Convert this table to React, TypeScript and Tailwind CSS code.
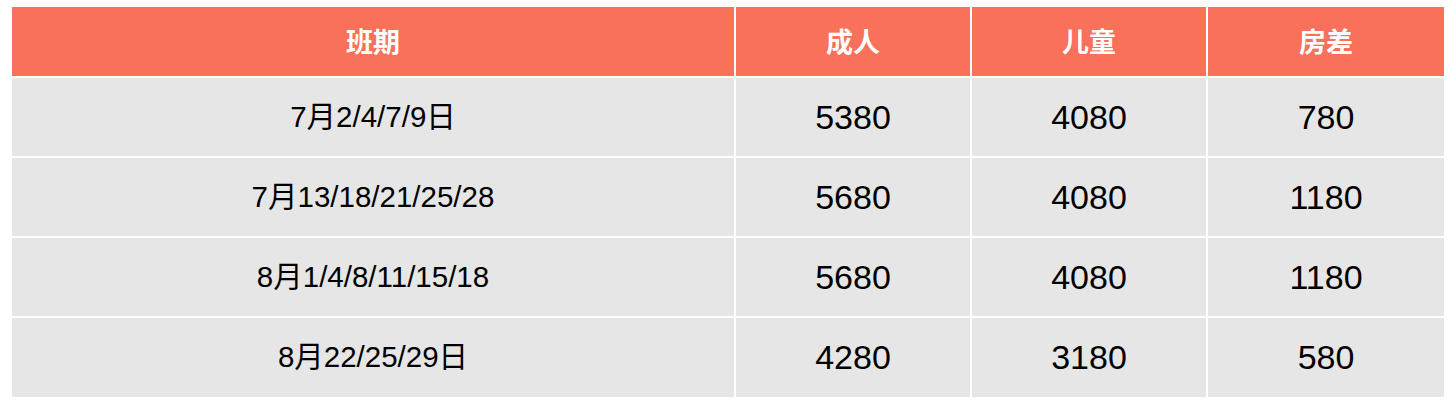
import React from "react";

const rows = [
  ["7月2/4/7/9日", "5380", "4080", "780"],
  ["7月13/18/21/25/28", "5680", "4080", "1180"],
  ["8月1/4/8/11/15/18", "5680", "4080", "1180"],
  ["8月22/25/29日", "4280", "3180", "580"],
];

export default function App() {
  return (
    <div className="w-[1455px] h-[407px] bg-white pt-[7px] pl-[12px]" style={{ fontFamily: '"Liberation Sans", "Noto Sans CJK SC", sans-serif' }}>
      <div className="grid grid-cols-[722px_234px_234px_236px] gap-[2px] w-[1432px]">
        {["班期", "成人", "儿童", "房差"].map((h) => (
          <div key={h} className="h-[69px] bg-[#F9705B] flex items-center justify-center text-white font-bold text-[27px]" style={{ fontFamily: '"Noto Sans CJK SC", sans-serif' }}>
            {h}
          </div>
        ))}
        {rows.map((r, i) => (
          <React.Fragment key={i}>
            <div className={`${i === 3 ? "h-[79px]" : "h-[78px]"} bg-[#E6E6E6] flex items-center justify-center text-black text-[29.5px]`}>
              {r[0]}
            </div>
            {r.slice(1).map((v, j) => (
              <div key={j} className={`${i === 3 ? "h-[79px]" : "h-[78px]"} bg-[#E6E6E6] flex items-center justify-center text-black text-[34px]`}>
                {v}
              </div>
            ))}
          </React.Fragment>
        ))}
      </div>
    </div>
  );
}
